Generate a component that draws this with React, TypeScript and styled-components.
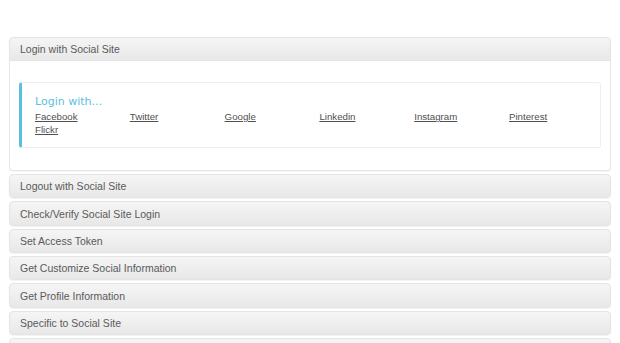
import { createGlobalStyle, styled } from "styled-components";

const GlobalStyle = createGlobalStyle`
  html, body {
    margin: 0;
    padding: 0;
    background: #fff;
  }
  body {
    font-family: "Liberation Sans", Arial, sans-serif;
  }
`;

const sites = ["Facebook", "Twitter", "Google", "Linkedin", "Instagram", "Pinterest", "Flickr"];

// the last bar is cut by the bottom of the window, its label is not visible
const sections = [
  "Logout with Social Site",
  "Check/Verify Social Site Login",
  "Set Access Token",
  "Get Customize Social Information",
  "Get Profile Information",
  "Specific to Social Site",
  "",
];

const App = () => {
  return (
    <Page>
      <GlobalStyle />
      <Accordion>
        <Panel>
          <Heading $open>Login with Social Site</Heading>
          <Body>
            <Well>
              <WellTitle>Login with...</WellTitle>
              <LinkGrid>
                {sites.map((site) => (
                  <a key={site} href="#">
                    {site}
                  </a>
                ))}
              </LinkGrid>
            </Well>
          </Body>
        </Panel>
        {sections.map((title, i) => (
          <Panel key={i}>
            <Heading>{title}</Heading>
          </Panel>
        ))}
      </Accordion>
    </Page>
  );
};

const Page = styled.div`
  width: 620px;
  height: 343px;
  overflow: hidden;
  padding: 37px 9px 0;
  box-sizing: border-box;
`;

const Accordion = styled.div`
  display: flex;
  flex-direction: column;
  gap: 3px;
`;

const Panel = styled.div`
  display: flex;
  flex-direction: column;
`;

const Heading = styled.div<{ $open?: boolean }>`
  height: 24.33px;
  box-sizing: border-box;
  padding: 0 10px;
  display: flex;
  align-items: center;
  font-size: 10.5px;
  color: #5a5a5a;
  background: linear-gradient(#f5f5f5, #e8e8e8);
  border: 1px solid #e4e4e4;
  border-radius: ${(p) => (p.$open ? "4px 4px 0 0" : "4px")};
  box-shadow: 0 1px 1px rgba(0, 0, 0, 0.05);
`;

const Body = styled.div`
  padding: 21px 9px 22px;
  border: 1px solid #e6e6e6;
  border-top: none;
  border-radius: 0 0 4px 4px;
  background: #fff;
  box-shadow: 0 1px 1px rgba(0, 0, 0, 0.04);
`;

const Well = styled.div`
  padding: 12px 13px 11px;
  border: 1px solid #eee;
  border-left: 3px solid #5bc0de;
  border-radius: 3px;
  background: #fff;
`;

const WellTitle = styled.h4`
  margin: 0 0 2px;
  font-family: "DejaVu Sans", Verdana, sans-serif;
  font-size: 11px;
  font-weight: normal;
  line-height: 14px;
  color: #5bc0de;
`;

const LinkGrid = styled.div`
  display: grid;
  grid-template-columns: repeat(6, 94.8px);
  line-height: 12.4px;
  font-size: 9.7px;

  & a {
    color: #505050;
    text-decoration: underline;
  }
`;

export default App;
